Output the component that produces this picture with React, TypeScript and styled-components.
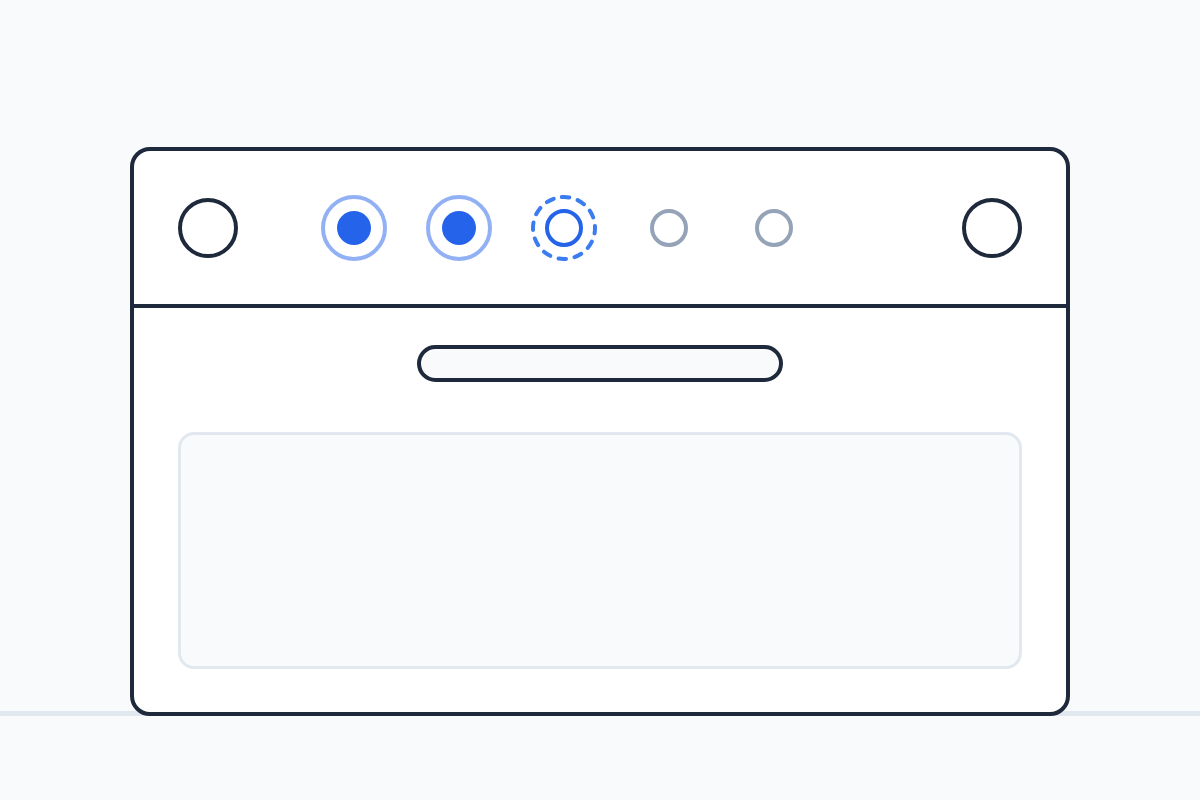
import React from "react";
import styled, { createGlobalStyle } from "styled-components";

const Global = createGlobalStyle`
  html, body { margin: 0; padding: 0; background: #f8fafc; font-family: "Inter", "Liberation Sans", sans-serif; }
  * { box-sizing: border-box; }
`;

const Scene = styled.div`
  width: 1200px;
  height: 800px;
  padding-top: 147px;
  padding-left: 130px;
  background: linear-gradient(
    to bottom,
    transparent 711px,
    #e2e8f0 711px,
    #e2e8f0 716px,
    transparent 716px
  );
`;

const Oven = styled.div`
  width: 940px;
  height: 569px;
  border: 4px solid #1e293b;
  border-radius: 20px;
  background: #ffffff;
  display: flex;
  flex-direction: column;
  overflow: hidden;
`;

const ControlPanel = styled.div`
  height: 157px;
  flex-shrink: 0;
  border-bottom: 4px solid #1e293b;
  display: flex;
  align-items: center;
  padding: 0 44px;
`;

const Knob = styled.div<{ $push?: boolean }>`
  width: 60px;
  height: 60px;
  border-radius: 50%;
  border: 4px solid #1e293b;
  flex-shrink: 0;
  margin-left: ${(p) => (p.$push ? "auto" : "0")};
`;

const Indicators = styled.div`
  display: flex;
  align-items: center;
  gap: 39px;
  margin-left: 83px;
`;

const Slot = styled.div`
  width: 66px;
  height: 66px;
  display: flex;
  align-items: center;
  justify-content: center;
`;

const ActiveRing = styled.div`
  width: 66px;
  height: 66px;
  border-radius: 50%;
  border: 4px solid #92b1f5;
  display: flex;
  align-items: center;
  justify-content: center;
`;

const Dot = styled.div`
  width: 34px;
  height: 34px;
  border-radius: 50%;
  background: #2563eb;
`;

const IdleRing = styled.div`
  width: 38px;
  height: 38px;
  border-radius: 50%;
  border: 4px solid #94a3b8;
`;

const Body = styled.div`
  flex: 1;
  display: flex;
  flex-direction: column;
  align-items: center;
  padding: 37px 44px 0;
`;

const Handle = styled.div`
  width: 366px;
  height: 37px;
  border: 4px solid #1e293b;
  border-radius: 999px;
  background: #f8fafc;
`;

const Window = styled.div`
  margin-top: 50px;
  width: 100%;
  height: 237px;
  border: 3px solid #e2e8f0;
  border-radius: 16px;
  background: #f8fafc;
`;

const PendingIcon = () => (
  <svg width="66" height="66" viewBox="0 0 66 66">
    <circle
      cx="33"
      cy="33"
      r="31"
      fill="none"
      stroke="#3b7cf0"
      strokeWidth="4"
      strokeLinecap="round"
      strokeDasharray="7.5 8.73"
      transform="rotate(-94 33 33)"
    />
    <circle cx="33" cy="33" r="17" fill="none" stroke="#2563eb" strokeWidth="4" />
  </svg>
);

export default function App() {
  return (
    <>
      <Global />
      <Scene>
        <Oven>
          <ControlPanel>
            <Knob />
            <Indicators>
              <Slot>
                <ActiveRing>
                  <Dot />
                </ActiveRing>
              </Slot>
              <Slot>
                <ActiveRing>
                  <Dot />
                </ActiveRing>
              </Slot>
              <Slot>
                <PendingIcon />
              </Slot>
              <Slot>
                <IdleRing />
              </Slot>
              <Slot>
                <IdleRing />
              </Slot>
            </Indicators>
            <Knob $push />
          </ControlPanel>
          <Body>
            <Handle />
            <Window />
          </Body>
        </Oven>
      </Scene>
    </>
  );
}
